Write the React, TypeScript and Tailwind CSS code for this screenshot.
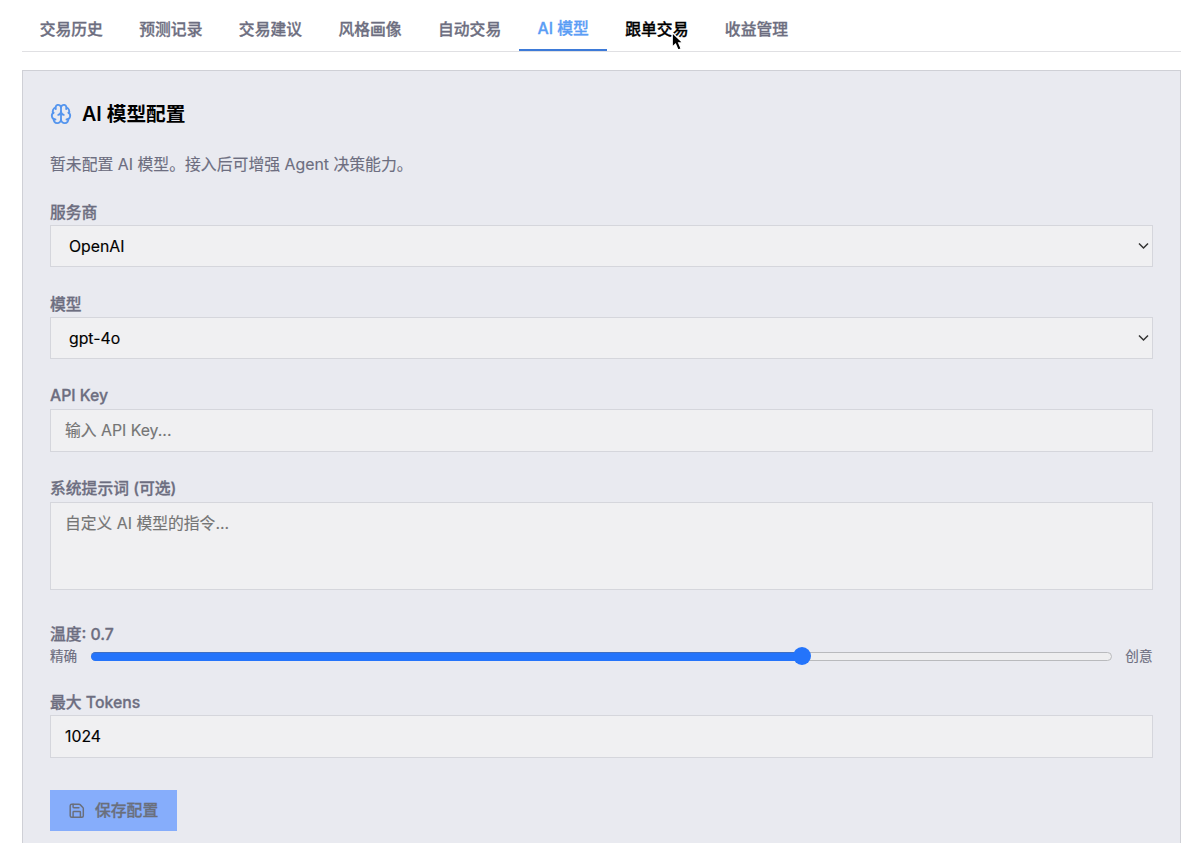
import { useState, type ReactNode } from "react";
import { Brain, Save } from "lucide-react";

const tabs = ["交易历史", "预测记录", "交易建议", "风格画像", "自动交易", "AI 模型", "跟单交易", "收益管理"];
const ACTIVE = "AI 模型";
const HOVERED = "跟单交易";

const boxClass =
  "block w-full rounded-none border border-[#d5d6dc] bg-[#f0f0f2] text-[15.8px] text-black outline-none [-webkit-text-stroke:0.15px] placeholder:text-[#757575]";

function Pointer() {
  return (
    <svg className="absolute top-[31px] left-[64px] h-[21px] w-[14px]" viewBox="0 0 14 21" fill="none">
      <path d="M1.2 1.6V16.2L4.5 13.1L7 19.1L10.2 17.8L7.7 12H12.1Z" fill="#000" stroke="#fff" strokeWidth="1.3" />
    </svg>
  );
}

function Tab({ label }: { label: string }) {
  if (label === ACTIVE) {
    return (
      <button className="-mb-px flex h-[51px] items-center border-b-[2.5px] border-[#3d7ad8] px-[18.2px] pt-[8px] text-[#5b9df5]">
        {label}
      </button>
    );
  }
  if (label === HOVERED) {
    return (
      <button className="relative flex h-[50px] items-center px-[18.2px] pt-[10px] text-black">
        {label}
        <Pointer />
      </button>
    );
  }
  return <button className="flex h-[50px] items-center px-[18.2px] pt-[10px]">{label}</button>;
}

function Field({ label, low = false, children }: { label: string; low?: boolean; children: ReactNode }) {
  return (
    <label className="block">
      <span
        className={`flex h-[26px] items-center font-medium text-[#6d6e80] [-webkit-text-stroke:0.3px] ${low ? "pt-[2px]" : ""}`}
      >
        {label}
      </span>
      {children}
    </label>
  );
}

function SelectBox({ options }: { options: string[] }) {
  return (
    <span className="relative block">
      <select className={`${boxClass} h-[42px] appearance-none pt-[2px] pl-[18px]`}>
        {options.map((o) => (
          <option key={o}>{o}</option>
        ))}
      </select>
      <svg className="pointer-events-none absolute top-[17px] right-[4px] h-[8px] w-[11px]" viewBox="0 0 11 8" fill="none">
        <path d="M1 1.5L5.5 6L10 1.5" stroke="#333" strokeWidth="1.5" />
      </svg>
    </span>
  );
}

function TemperatureSlider({ value }: { value: number }) {
  return (
    <div className="flex h-[20px] items-center text-[13.6px] text-[#6d6e80] [-webkit-text-stroke:0.15px]">
      <span className="w-[41px]">精确</span>
      <div className="relative h-[9px] flex-1 rounded-full border border-[#b9babd] bg-[#eeeeef]">
        <div
          className="absolute -top-px -left-px h-[9px] rounded-full border-t border-[#3e6fc4] bg-[#2474fb]"
          style={{ width: `${value * 100}%` }}
        />
        <div
          className="absolute -top-[5.5px] h-[18px] w-[18px] -translate-x-1/2 rounded-full bg-[#2474fb]"
          style={{ left: `${value * 98.3 + 0.9}%` }}
        />
      </div>
      <span className="w-[41px] text-right">创意</span>
    </div>
  );
}

export default function App() {
  const [tokens, setTokens] = useState("1024");
  return (
    <div className="flex h-[843px] flex-col overflow-hidden bg-white pr-[19px] pl-[21.5px] font-['Inter','Noto_Sans_CJK_SC',sans-serif] text-[15.8px] text-[#6d6e80]">
      <nav className="flex h-[52px] shrink-0 items-start border-b border-[#e0e0e3] font-medium whitespace-nowrap [-webkit-text-stroke:0.3px]">
        {tabs.map((t) => (
          <Tab key={t} label={t} />
        ))}
      </nav>

      <main className="mt-[18px] flex-1 border border-b-0 border-[#cfd0d6] bg-[#e9eaf0] px-[27.5px] pt-[28px]">
        <h2 className="flex h-[30px] items-center gap-[10px] text-[19.7px] font-semibold text-black">
          <Brain className="h-[22px] w-[22px] text-[#5495ee]" strokeWidth={2} />
          <span className="pt-[2px]">AI 模型配置</span>
        </h2>
        <p className="mt-[22px] flex h-[26px] items-center pt-[2px] text-[15.85px] [-webkit-text-stroke:0.15px]">
          暂未配置 AI 模型。接入后可增强 Agent 决策能力。
        </p>

        <form className="mt-[22px]">
          <div className="flex flex-col gap-[24px]">
            <Field label="服务商" low>
              <SelectBox options={["OpenAI"]} />
            </Field>
            <Field label="模型" low>
              <SelectBox options={["gpt-4o"]} />
            </Field>
            <Field label="API Key">
              <input className={`${boxClass} h-[43px] px-[14px]`} placeholder="输入 API Key..." />
            </Field>
            <Field label="系统提示词 (可选)">
              <textarea className={`${boxClass} h-[88px] resize-none px-[14px] py-[9px] leading-[24px]`} placeholder="自定义 AI 模型的指令..." />
            </Field>
          </div>

          <div className="mt-[31px]">
            <div className="flex h-[25px] items-center pt-[2px] font-medium [-webkit-text-stroke:0.3px]">温度: 0.7</div>
            <TemperatureSlider value={0.7} />
          </div>

          <div className="mt-[23px]">
            <Field label="最大 Tokens" low>
              <input
                className={`${boxClass} h-[43px] px-[14px]`}
                value={tokens}
                onChange={(e) => setTokens(e.target.value)}
              />
            </Field>
          </div>

          <button
            type="button"
            className="mt-[32px] flex h-[41px] w-[127px] items-center gap-[9.5px] bg-[#86adfb] pl-[18px] font-medium text-[#6a6f7b] [-webkit-text-stroke:0.3px]"
          >
            <Save className="h-[17.5px] w-[17.5px]" strokeWidth={2} />
            保存配置
          </button>
        </form>
      </main>
    </div>
  );
}
